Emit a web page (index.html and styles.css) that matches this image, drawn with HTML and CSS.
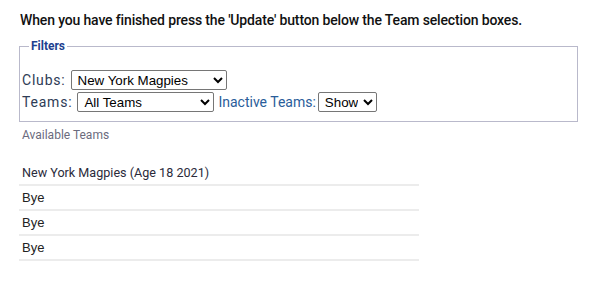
FILE: index.html
```html
<!DOCTYPE html>
<html lang="en">
<head>
    <meta charset="UTF-8">
    <title>Team Selection</title>
    <link rel="stylesheet" href="styles.css">
</head>
<body>
    <p class="intro">When you have finished press the 'Update' button below the Team selection boxes.</p>

    <fieldset class="filters">
        <legend>Filters</legend>
        <div class="filter-row">
            <label for="clubs">Clubs:</label>
            <select id="clubs" class="club-select">
                <option>New York Magpies</option>
            </select>
        </div>
        <div class="filter-row">
            <label for="teams">Teams:</label>
            <select id="teams" class="team-select">
                <option>All Teams</option>
            </select>
            <label for="inactive" class="inactive-label">Inactive Teams:</label>
            <select id="inactive" class="inactive-select">
                <option>Show</option>
            </select>
        </div>
    </fieldset>

    <div class="available">Available Teams</div>

    <ul class="team-list">
        <li class="team-name">New York Magpies (Age 18 2021)</li>
        <li>Bye</li>
        <li>Bye</li>
        <li>Bye</li>
    </ul>
</body>
</html>
```

FILE: styles.css
```css
body {
    margin: 0;
    padding: 12px 31px 0 19px;
    font-family: Roboto, 'Noto Sans', sans-serif;
    color: #222;
    background: white;
}

.intro {
    margin: 0 0 0 1px;
    font-size: 14px;
    font-weight: 500;
    letter-spacing: -0.15px;
    color: #111;
    line-height: 17px;
}

.filters {
    margin: 10px 0 0 0;
    padding: 16px 2px 8px 2px;
    border: 1px solid #b9b9cb;
    border-radius: 0;
}

.filters legend {
    margin-left: 7px;
    padding: 0 2px;
    font-size: 12px;
    font-weight: 700;
    color: #1e3f8f;
}

.filter-row {
    display: flex;
    align-items: center;
    height: 22px;
    font-size: 14px;
    color: #2e3c56;
}

.filter-row label {
    letter-spacing: 0.8px;
    margin-right: 5px;
}

.filter-row .inactive-label {
    letter-spacing: 0;
    margin: 0 2px 0 4px;
    color: #2a5d9a;
}

select {
    font-family: 'Liberation Sans', Arial, sans-serif;
    font-size: 13.33px;
    height: 20px;
    padding: 0 2px;
    border: 1px solid #767676;
    border-radius: 2px;
    background: white;
    color: #000;
}

.club-select {
    width: 156px;
}

.team-select {
    width: 137px;
}

.inactive-select {
    width: 59px;
}

.available {
    margin: 6px 0 0 3px;
    font-size: 12px;
    line-height: 14px;
    color: #6b6b7d;
}

.team-list {
    list-style: none;
    margin: 19px 0 0 0;
    padding: 0;
    width: 400px;
}

.team-list li {
    height: 23px;
    line-height: 23px;
    padding-left: 3px;
    border-bottom: 2px solid #ececec;
    font-family: 'Liberation Sans', Arial, sans-serif;
    font-size: 13px;
    color: #222;
}

.team-list .team-name {
    font-family: Roboto, 'Noto Sans', sans-serif;
    font-size: 12.6px;
    color: #2b2b3b;
}
```
